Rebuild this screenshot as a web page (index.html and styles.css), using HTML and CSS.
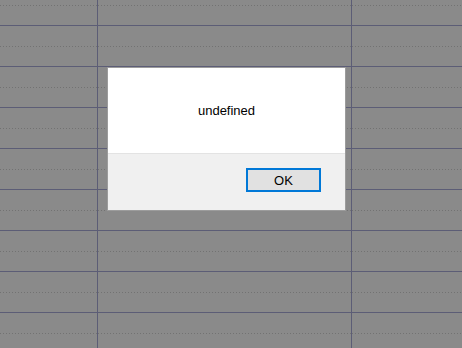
FILE: index.html
```html
<!DOCTYPE html>
<html>
<head>
<meta charset="utf-8">
<link rel="stylesheet" href="styles.css">
</head>
<body>
<div class="sheet">
  <div class="row top dot"><div class="cell c1"></div><div class="cell c2"></div><div class="cell c3"></div></div>
  <div class="row solid"><div class="cell c1"></div><div class="cell c2"></div><div class="cell c3"></div></div>
  <div class="row dot"><div class="cell c1"></div><div class="cell c2"></div><div class="cell c3"></div></div>
  <div class="row solid"><div class="cell c1"></div><div class="cell c2"></div><div class="cell c3"></div></div>
  <div class="row dot"><div class="cell c1"></div><div class="cell c2"></div><div class="cell c3"></div></div>
  <div class="row solid"><div class="cell c1"></div><div class="cell c2"></div><div class="cell c3"></div></div>
  <div class="row dot"><div class="cell c1"></div><div class="cell c2"></div><div class="cell c3"></div></div>
  <div class="row solid"><div class="cell c1"></div><div class="cell c2"></div><div class="cell c3"></div></div>
  <div class="row dot"><div class="cell c1"></div><div class="cell c2"></div><div class="cell c3"></div></div>
  <div class="row solid"><div class="cell c1"></div><div class="cell c2"></div><div class="cell c3"></div></div>
  <div class="row dot"><div class="cell c1"></div><div class="cell c2"></div><div class="cell c3"></div></div>
  <div class="row solid"><div class="cell c1"></div><div class="cell c2"></div><div class="cell c3"></div></div>
  <div class="row dot"><div class="cell c1"></div><div class="cell c2"></div><div class="cell c3"></div></div>
  <div class="row solid"><div class="cell c1"></div><div class="cell c2"></div><div class="cell c3"></div></div>
  <div class="row dot"><div class="cell c1"></div><div class="cell c2"></div><div class="cell c3"></div></div>
  <div class="row solid"><div class="cell c1"></div><div class="cell c2"></div><div class="cell c3"></div></div>
  <div class="row dot"><div class="cell c1"></div><div class="cell c2"></div><div class="cell c3"></div></div>
  <div class="row solid"><div class="cell c1"></div><div class="cell c2"></div><div class="cell c3"></div></div>
</div>

<div class="dialog" role="alertdialog">
  <div class="dialog-body">undefined</div>
  <div class="dialog-footer">
    <button class="ok-btn" type="button">OK</button>
  </div>
</div>
</body>
</html>
```

FILE: styles.css
```css
html, body {
  margin: 0;
  padding: 0;
  width: 462px;
  height: 348px;
  overflow: hidden;
  background: #8a8a8a;
  font-family: "Liberation Sans", Arial, sans-serif;
}

.sheet {
  display: flex;
  flex-direction: column;
}

.row {
  display: flex;
  flex: none;
}

.row.dot {
  height: 21px;
}

.row.solid {
  height: 19px;
  border-bottom: 1px solid #5c5d76;
}

.row.top {
  height: 6px;
}

.cell {
  height: 100%;
  box-sizing: border-box;
}

.row.dot .cell {
  background-image: linear-gradient(to right, #727272 1px, transparent 1px);
  background-size: 3px 1px;
  background-repeat: repeat-x;
  background-position: 0 100%;
}

.c1 {
  width: 98px;
  border-right: 1px solid #5c5d76;
}

.c2 {
  width: 254px;
  border-right: 1px solid #5c5d76;
}

.c3 {
  flex: 1;
}

.dialog {
  position: absolute;
  left: 107px;
  top: 67px;
  width: 239px;
  height: 144px;
  box-sizing: border-box;
  border: 1px solid #9c9c9c;
  background: #ffffff;
  display: flex;
  flex-direction: column;
}

.dialog-body {
  height: 86px;
  box-sizing: border-box;
  padding-top: 35px;
  text-align: center;
  font-size: 13px;
  line-height: 15px;
  color: #000;
  border-bottom: 1px solid #e3e3e3;
  flex: none;
}

.dialog-footer {
  flex: 1;
  background: #f0f0f0;
  display: flex;
  justify-content: flex-end;
  align-items: flex-start;
  padding: 14px 24px 0 0;
}

.ok-btn {
  width: 75px;
  height: 24px;
  box-sizing: border-box;
  border: 2px solid #0078d7;
  background: #e1e1e1;
  font-family: "Liberation Sans", Arial, sans-serif;
  font-size: 13px;
  color: #000;
  padding: 0;
  margin: 0;
  border-radius: 0;
}
```
